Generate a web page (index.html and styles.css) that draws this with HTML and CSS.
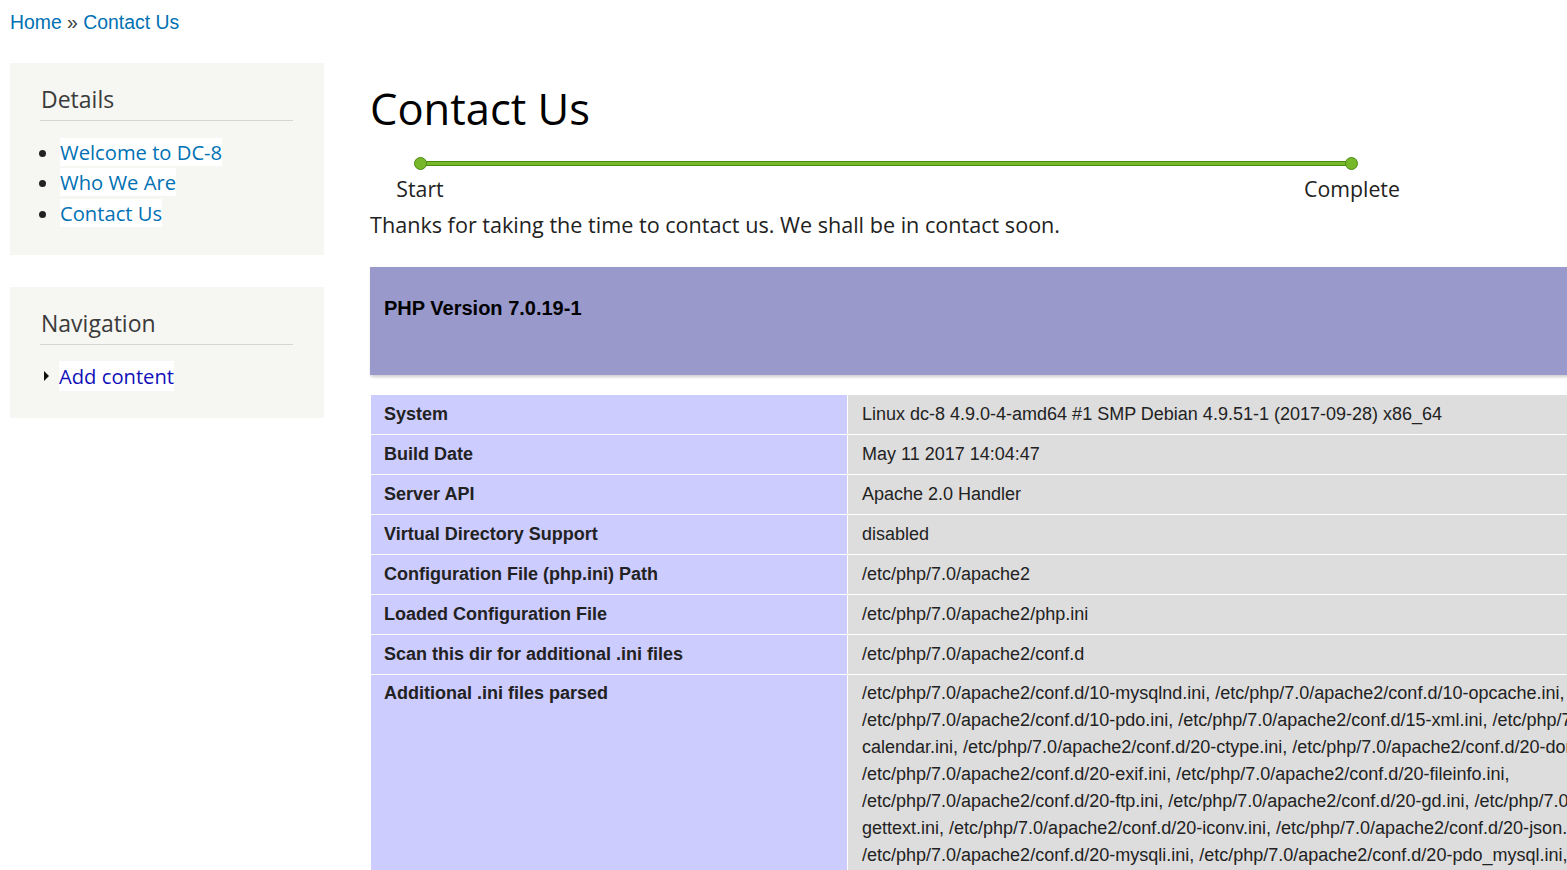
FILE: index.html
```html
<!DOCTYPE html>
<html>
<head>
<meta charset="utf-8">
<title>Contact Us</title>
<link rel="stylesheet" href="styles.css">
</head>
<body>
<div class="breadcrumb"><a href="#">Home</a> » <a href="#">Contact Us</a></div>
<div class="layout">
  <aside class="sidebar">
    <section class="block block-details">
      <h2 class="block-title">Details</h2>
      <ul class="menu-bullets">
        <li><a href="#">Welcome to DC-8</a></li>
        <li><a href="#">Who We Are</a></li>
        <li><a href="#">Contact Us</a></li>
      </ul>
    </section>
    <section class="block block-nav">
      <h2 class="block-title">Navigation</h2>
      <ul class="menu-arrows">
        <li><span class="tri"></span><a href="#" class="nav-link">Add content</a></li>
      </ul>
    </section>
  </aside>
  <main class="content">
    <h1 class="page-title">Contact Us</h1>
    <div class="progress">
      <div class="progress-track">
        <span class="dot"></span>
        <span class="bar"></span>
        <span class="dot"></span>
      </div>
      <div class="progress-labels">
        <span class="label">Start</span>
        <span class="label">Complete</span>
      </div>
    </div>
    <p class="thanks">Thanks for taking the time to contact us. We shall be in contact soon.</p>
    <div class="phpinfo">
      <div class="php-head"><h1 class="php-title">PHP Version 7.0.19-1</h1></div>
      <table class="php-table">
        <tr><td class="e">System</td><td class="v">Linux dc-8 4.9.0-4-amd64 #1 SMP Debian 4.9.51-1 (2017-09-28) x86_64</td></tr>
        <tr><td class="e">Build Date</td><td class="v">May 11 2017 14:04:47</td></tr>
        <tr><td class="e">Server API</td><td class="v">Apache 2.0 Handler</td></tr>
        <tr><td class="e">Virtual Directory Support</td><td class="v">disabled</td></tr>
        <tr><td class="e">Configuration File (php.ini) Path</td><td class="v">/etc/php/7.0/apache2</td></tr>
        <tr><td class="e">Loaded Configuration File</td><td class="v">/etc/php/7.0/apache2/php.ini</td></tr>
        <tr><td class="e">Scan this dir for additional .ini files</td><td class="v">/etc/php/7.0/apache2/conf.d</td></tr>
        <tr><td class="e">Additional .ini files parsed</td><td class="v multi">/etc/php/7.0/apache2/conf.d/10-<wbr>mysqlnd.ini, /etc/php/7.0/apache2/conf.d/10-<wbr>opcache.ini, /etc/php/7.0/apache2/conf.d/10-<wbr>pdo.ini, /etc/php/7.0/apache2/conf.d/15-<wbr>xml.ini, /etc/php/7.0/apache2/conf.d/20-<wbr>calendar.ini, /etc/php/7.0/apache2/conf.d/20-<wbr>ctype.ini, /etc/php/7.0/apache2/conf.d/20-<wbr>dom.ini, /etc/php/7.0/apache2/conf.d/20-<wbr>exif.ini, /etc/php/7.0/apache2/conf.d/20-<wbr>fileinfo.ini, /etc/php/7.0/apache2/conf.d/20-<wbr>ftp.ini, /etc/php/7.0/apache2/conf.d/20-<wbr>gd.ini, /etc/php/7.0/apache2/conf.d/20-<wbr>gettext.ini, /etc/php/7.0/apache2/conf.d/20-<wbr>iconv.ini, /etc/php/7.0/apache2/conf.d/20-<wbr>json.ini, /etc/php/7.0/apache2/conf.d/20-<wbr>mysqli.ini, /etc/php/7.0/apache2/conf.d/20-<wbr>pdo_mysql.ini, /etc/php/7.0/apache2/conf.d/20-<wbr>phar.ini, /etc/php/7.0/apache2/conf.d/20-<wbr>posix.ini, /etc/php/7.0/apache2/conf.d/20-<wbr>readline.ini</td></tr>
      </table>
    </div>
  </main>
</div>
</body>
</html>
```
FILE: styles.css
```css
html, body {
  margin: 0;
  padding: 0;
  background: #fff;
}
body {
  width: 1567px;
  height: 870px;
  overflow: hidden;
  font-family: "Open Sans", "Noto Sans", sans-serif;
  color: #3b3b3b;
}
a {
  text-decoration: none;
}
.breadcrumb {
  font-family: "Liberation Sans", Arial, sans-serif;
  font-size: 19.4px;
  color: #3b3b3b;
  padding: 10px 0 0 10px;
  line-height: 24px;
  height: 53px;
}
.breadcrumb a {
  color: #0071b3;
}
.layout {
  display: flex;
  align-items: flex-start;
}
.sidebar {
  width: 314px;
  margin-left: 10px;
  flex: none;
  display: flex;
  flex-direction: column;
  gap: 32px;
}
.block {
  background: #f6f6f2;
  padding: 0 31px 0 30px;
}
.block-details {
  height: 192px;
}
.block-nav {
  height: 131px;
}
.block-title {
  font-weight: normal;
  font-size: 23px;
  color: #3b3b3b;
  margin: 0;
  padding: 19px 0 4px 1px;
  line-height: 34px;
  border-bottom: 1px solid #d6d6d6;
}
.menu-bullets {
  list-style: disc;
  margin: 16px 0 0 0;
  padding: 0 0 0 20px;
  font-size: 20.2px;
  line-height: 30.4px;
  color: #222;
}
.menu-bullets a, .nav-link {
  color: #0071b3;
  background: #fff;
}
.menu-arrows {
  list-style: none;
  margin: 16px 0 0 0;
  padding: 0;
  font-size: 20.2px;
  line-height: 30px;
}
.menu-arrows li {
  display: flex;
  align-items: center;
}
.tri {
  width: 0;
  height: 0;
  border-left: 5px solid #111;
  border-top: 5px solid transparent;
  border-bottom: 5px solid transparent;
  margin: 0 10px 0 4px;
}
.menu-arrows .nav-link {
  color: #1010b8;
}
.content {
  margin-left: 46px;
  flex: none;
  width: 1395px;
}
.page-title {
  font-weight: normal;
  font-size: 43.5px;
  color: #000;
  margin: 0;
  padding-top: 16px;
  line-height: 60px;
}
.progress {
  margin-top: 18px;
  width: 1032px;
}
.progress-track {
  display: flex;
  align-items: center;
  margin: 0 44px;
}
.dot {
  width: 11px;
  height: 11px;
  border-radius: 50%;
  background: #77b82a;
  border: 1px solid #4c8a12;
  flex: none;
  position: relative;
  z-index: 1;
}
.bar {
  flex: 1;
  height: 3px;
  background: #77b82a;
  border-top: 1px solid #4c8a12;
  border-bottom: 1px solid #4c8a12;
  margin: 0 -1px;
}
.progress-labels {
  display: flex;
  justify-content: space-between;
  font-size: 21.3px;
  line-height: 28px;
  color: #222;
  margin-top: 5px;
}
.label {
  width: 100px;
  text-align: center;
}
.thanks {
  margin: 0;
  font-size: 21.6px;
  line-height: 30px;
  color: #222;
  padding-top: 7px;
}
.phpinfo {
  margin-top: 27px;
  font-family: "Liberation Sans", Arial, sans-serif;
  color: #222;
  width: 1395px;
}
.php-head {
  background: #9999cc;
  height: 108px;
  box-shadow: 1px 2px 3px #ccc;
  padding: 0 14px;
  box-sizing: border-box;
}
.php-title {
  margin: 0;
  font-size: 20px;
  font-weight: bold;
  line-height: 24px;
  padding-top: 29px;
  color: #000;
}
.php-table {
  margin-top: 19px;
  border-collapse: collapse;
  width: 1395px;
  table-layout: fixed;
  font-size: 18px;
}
.php-table td {
  border: 1px solid #fff;
  padding: 0 14px;
  height: 39px;
  vertical-align: middle;
  line-height: 27px;
}
.php-table td.e {
  width: 449px;
  padding-left: 13px;
  background: #ccccff;
  font-weight: bold;
  color: #222;
}
.php-table td.v {
  background: #dddddd;
  color: #222;
}
.php-table tr:last-child td {
  vertical-align: top;
  padding-top: 5px;
}
```
